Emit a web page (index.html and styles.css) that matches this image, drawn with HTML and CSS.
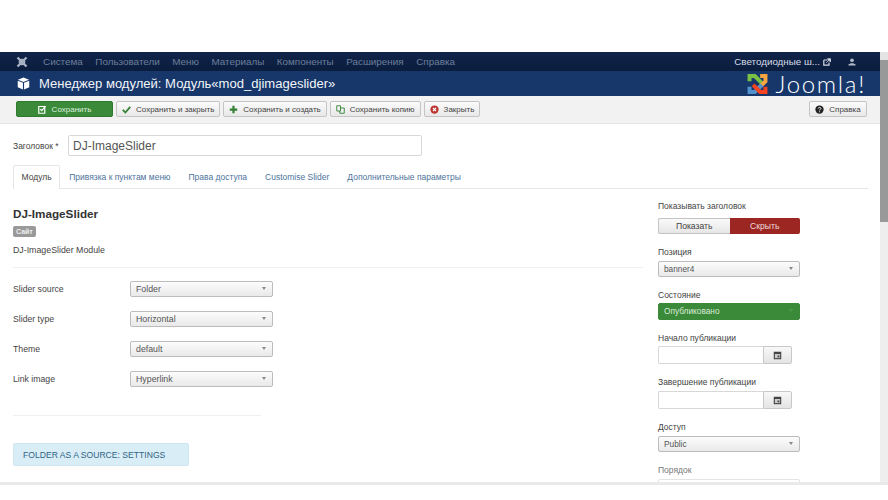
FILE: index.html
```html
<!DOCTYPE html>
<html lang="ru">
<head>
<meta charset="utf-8">
<title>Менеджер модулей</title>
<link rel="stylesheet" href="styles.css">
</head>
<body>
<div class="frame">
  <div class="app">
    <div class="page">
      <nav class="navbar">
        <svg class="nav-logo" viewBox="0 0 16 16"><path d="M2 2l12 12M14 2L2 14" stroke="#aab4c4" stroke-width="3"/><circle cx="8" cy="8" r="3.4" fill="none" stroke="#aab4c4" stroke-width="2"/></svg>
        <a class="nav-item">Система</a>
        <a class="nav-item">Пользователи</a>
        <a class="nav-item">Меню</a>
        <a class="nav-item">Материалы</a>
        <a class="nav-item">Компоненты</a>
        <a class="nav-item">Расширения</a>
        <a class="nav-item">Справка</a>
        <span class="nav-site">Светодиодные ш...</span>
        <svg class="nav-ext" viewBox="0 0 10 10"><path d="M1 2.500h4.500M1 2.500v6.500h6.500V5.500" fill="none" stroke="#d5dbe5" stroke-width="1.500"/><path d="M4 6l4.500-4.500M5.500 1h4v4z" stroke="#d5dbe5" fill="#d5dbe5"/></svg>
        <svg class="nav-user" viewBox="0 0 10 10"><circle cx="5" cy="2.800" r="2.300" fill="#aeb8c8"/><path d="M0.500 9.500V8l3-1.500h3L9.500 8v1.500z" fill="#aeb8c8"/></svg>
      </nav>
      <header class="titlebar">
        <svg class="cube" viewBox="0 0 14 14"><path d="M7 0.500l6 2.500-6 2.500-6-2.500z" fill="#fff"/><path d="M0.800 4l5.600 2.300V13.500L0.800 11z" fill="#fff"/><path d="M13.200 4L7.600 6.300V13.500L13.200 11z" fill="#fff"/></svg>
        <h1 class="title">Менеджер модулей: Модуль«mod_djimageslider»</h1>
        <div class="brand">
          <svg class="brand-mark" viewBox="0 0 26 26">
            <path d="M4 10V4h6l8 8" stroke="#7ac143" stroke-width="4.500" fill="none"/>
            <path d="M16 4h6v6l-8 8" stroke="#f9a541" stroke-width="4.500" fill="none"/>
            <path d="M4 16v6h6l8-8" stroke="#5091cd" stroke-width="4.500" fill="none"/>
            <path d="M22 16v6h-6l-8-8" stroke="#f44321" stroke-width="4.500" fill="none"/>
          </svg>
          <span class="brand-name">Joomla!</span>
        </div>
      </header>
      <div class="toolbar">
        <button class="btn btn-save">
          <svg class="ico" viewBox="0 0 12 12"><path d="M1 2h8v9H1z" fill="none" stroke="#fff" stroke-width="1.600"/><path d="M3 5.500l2 2 5-6" fill="none" stroke="#fff" stroke-width="1.800"/></svg>
          Сохранить
        </button>
        <button class="btn">
          <svg class="ico" viewBox="0 0 12 12"><path d="M1 6.500l3.500 3.500L11 2.500" fill="none" stroke="#378137" stroke-width="2.400"/></svg>
          Сохранить и закрыть
        </button>
        <button class="btn">
          <svg class="ico" viewBox="0 0 12 12"><path d="M6 1v10M1 6h10" stroke="#378137" stroke-width="3"/></svg>
          Сохранить и создать
        </button>
        <button class="btn">
          <svg class="ico" viewBox="0 0 12 12"><path d="M1 1h5v7H1zM6 4h5v7H5V8" fill="none" stroke="#378137" stroke-width="1.200"/></svg>
          Сохранить копию
        </button>
        <button class="btn">
          <svg class="ico" viewBox="0 0 12 12"><circle cx="6" cy="6" r="5.500" fill="#bd362f"/><path d="M4 4l4 4M8 4l-4 4" stroke="#fff" stroke-width="1.600"/></svg>
          Закрыть
        </button>
        <button class="btn btn-help">
          <svg class="ico" viewBox="0 0 12 12"><circle cx="6" cy="6" r="5.500" fill="#222"/><path d="M4.300 4.600C4.300 2.800 7.800 2.800 7.800 4.600 7.800 6 6 5.800 6 7.200" fill="none" stroke="#fff" stroke-width="1.300"/><circle cx="6" cy="9" r=".8" fill="#fff"/></svg>
          Справка
        </button>
      </div>
      <main class="content">
        <div class="title-row">
          <label class="title-label">Заголовок *</label>
          <input class="title-input" value="DJ-ImageSlider">
        </div>
        <ul class="tabs">
          <li class="tab tab-active">Модуль</li>
          <li class="tab">Привязка к пунктам меню</li>
          <li class="tab">Права доступа</li>
          <li class="tab">Customise Slider</li>
          <li class="tab">Дополнительные параметры</li>
        </ul>
        <div class="columns">
          <section class="left">
            <h2 class="mod-name">DJ-ImageSlider</h2>
            <span class="badge">Сайт</span>
            <p class="mod-desc">DJ-ImageSlider Module</p>
            <hr class="rule">
            <div class="field"><label class="field-label">Slider source</label><div class="select">Folder<i class="caret"></i></div></div>
            <div class="field"><label class="field-label">Slider type</label><div class="select">Horizontal<i class="caret"></i></div></div>
            <div class="field"><label class="field-label">Theme</label><div class="select">default<i class="caret"></i></div></div>
            <div class="field"><label class="field-label">Link image</label><div class="select">Hyperlink<i class="caret"></i></div></div>
            <hr class="rule rule-short">
            <div class="notice">FOLDER AS A SOURCE: SETTINGS</div>
          </section>
          <aside class="right">
            <label class="side-label side-label-wide">Показывать заголовок</label>
            <div class="toggle"><span class="toggle-off">Показать</span><span class="toggle-on">Скрыть</span></div>
            <label class="side-label">Позиция</label>
            <div class="select select-side">banner4<i class="caret"></i></div>
            <label class="side-label side-label-tight">Состояние</label>
            <div class="select select-side select-green">Опубликовано<i class="caret caret-green"></i></div>
            <label class="side-label side-label-tight">Начало публикации</label>
            <div class="date"><span class="date-input"></span><span class="date-btn"><svg class="cal" viewBox="0 0 12 12"><path d="M1 1h10v10H1z" fill="#444"/><path d="M2.500 4h7v5.500h-7z" fill="#ccc"/><path d="M6 6h2.500v2.500H6z" fill="#444"/></svg></span></div>
            <label class="side-label">Завершение публикации</label>
            <div class="date"><span class="date-input"></span><span class="date-btn"><svg class="cal" viewBox="0 0 12 12"><path d="M1 1h10v10H1z" fill="#444"/><path d="M2.500 4h7v5.500h-7z" fill="#ccc"/><path d="M6 6h2.500v2.500H6z" fill="#444"/></svg></span></div>
            <label class="side-label">Доступ</label>
            <div class="select select-side">Public<i class="caret"></i></div>
            <label class="side-label side-last">Порядок</label>
            <div class="order-field"></div>
          </aside>
        </div>
      </main>
    </div>
    <div class="scrollbar"><div class="scroll-up"></div><div class="thumb"></div></div>
  </div>
</div>
</body>
</html>
```
FILE: styles.css
```css
* { box-sizing: border-box; }
html, body { margin: 0; height: 100%; background: #fff; overflow: hidden; }
body { font-family: "Liberation Sans", Arial, sans-serif; color: #444; font-size: 9px; }
.frame { padding-top: 52px; height: 500px; }
.app { display: flex; height: 433px; border-bottom: 3px solid #e9e9e9; }
.page { flex: 1; min-width: 0; overflow: hidden; }
.scrollbar { width: 8px; background: #eeeeee; }
.scroll-up { height: 8px; background: #e4e4e4; }
.thumb { height: 162px; background: #999999; }

.navbar { height: 19px; background: linear-gradient(#10244a, #0b1d3d); display: flex; align-items: center; padding-left: 16px; }
.nav-logo { width: 12px; height: 12px; margin-right: 15px; }
.nav-item { color: #6c7f9c; font-size: 9.900px; margin-right: 12.500px; }
.nav-site { margin-left: auto; color: #d5dbe5; font-size: 9.800px; }
.nav-ext { width: 8px; height: 8px; margin-left: 3px; }
.nav-user { width: 8px; height: 8px; margin-left: 17px; margin-right: 24px; }

.titlebar { height: 25px; background: #17376b; display: flex; align-items: center; padding-left: 17px; }
.cube { width: 13px; height: 13px; margin-right: 9px; }
.title { margin: 0; font-size: 13.050px; font-weight: 400; color: #f2f5f9; }
.brand { margin-left: auto; margin-right: 14px; display: flex; align-items: center; gap: 6px; }
.brand-mark { width: 23px; height: 24px; }
.brand-name { font-family: Lato, sans-serif; font-weight: 300; font-size: 24px; line-height: 25px; letter-spacing: 1.700px; color: #fff; }

.toolbar { height: 28px; background: #f2f2f2; border-bottom: 1px solid #e6e6e6; display: flex; align-items: center; padding: 0 13px 1px 16px; gap: 3px; }
.btn { height: 16px; padding: 0 5px; font: 8px "Liberation Sans", Arial, sans-serif; color: #444; background: linear-gradient(#fbfbfb, #e8e8e8); border: 1px solid #c4c4c4; border-radius: 2px; display: flex; align-items: center; gap: 5px; white-space: nowrap; }
.ico { width: 9px; height: 9px; flex: none; }
.btn-save { width: 97px; justify-content: center; background: #3a8a3a; border-color: #2f7a2f; color: #dfeedd; }
.btn-help { margin-left: auto; width: 58px; justify-content: center; }

.content { padding: 11px 12px 0 13px; }
.title-row { display: flex; align-items: center; height: 21px; }
.title-label { width: 55px; font-size: 8.500px; }
.title-input { width: 354px; height: 21px; border: 1px solid #d8d8d8; border-radius: 2px; padding: 0 4px; font: 12px "Liberation Sans", Arial, sans-serif; color: #555; background: #fff; }

.tabs { list-style: none; margin: 9px 0 0; padding: 0; display: flex; height: 24px; border-bottom: 1px solid #e6e6e6; }
.tab { padding: 0 9px; line-height: 24px; color: #4d749c; font-size: 8.500px; white-space: nowrap; }
.tab-active { color: #444; background: #fff; border: 1px solid #e6e6e6; border-bottom: 0; height: 24px; line-height: 23px; padding: 0 7.500px; border-radius: 2px 2px 0 0; }

.columns { display: flex; justify-content: space-between; }
.left { width: 630px; padding-top: 18px; }
.mod-name { margin: 0; font-size: 11.700px; line-height: 14px; color: #333; }
.badge { display: inline-block; margin-top: 5px; background: #999; color: #eee; font-size: 7px; font-weight: 700; height: 11px; line-height: 11px; padding: 0 3px; border-radius: 2px; }
.mod-desc { margin: 7px 0 0; font-size: 8.800px; line-height: 12px; }
.rule { margin: 11px 0 0; border: 0; border-top: 1px solid #f0f0f0; }
.rule-short { width: 248px; margin-top: 21px; }

.field { display: flex; align-items: center; height: 30px; }
.rule + .field { margin-top: 6px; }
.field-label { width: 117px; font-size: 8.700px; }
.select { position: relative; width: 143px; height: 16px; line-height: 14px; padding-left: 5px; font-size: 8.800px; color: #555; background: linear-gradient(#fcfcfc, #e9e9e9); border: 1px solid #bcbcbc; border-radius: 2px; }
.caret { position: absolute; right: 6px; top: 5px; border: 2.500px solid transparent; border-top: 3px solid #888; border-bottom: 0; }
.notice { width: 176px; height: 23px; margin-top: 27px; padding-left: 9px; line-height: 22px; background: #d9edf7; border: 1px solid #cfe6f1; border-radius: 2px; color: #2f6484; font-size: 8.600px; }

.right { width: 142px; margin-right: 68px; padding-top: 11px; }
.side-label { display: block; font-size: 8.500px; line-height: 12px; color: #444; margin-bottom: 3px; }
.side-label-wide { margin-bottom: 6px; }
.side-label-tight { margin-bottom: 2px; }
.toggle { display: flex; height: 16px; font-size: 8.600px; line-height: 16px; text-align: center; margin-bottom: 12px; }
.toggle-off { flex: 1; background: linear-gradient(#fafafa, #e6e6e6); border: 1px solid #c4c4c4; border-right: 0; border-radius: 2px 0 0 2px; line-height: 14px; }
.toggle-on { flex: 1; background: #9b2622; color: #f0dcdc; border-radius: 0 2px 2px 0; }
.select-side { width: 142px; margin-bottom: 12px; font-size: 8.300px; }
.select-green { height: 17px; line-height: 15px; background: #3a8a3a; border-color: #3a8a3a; color: #dcebd9; }
.caret-green { border-top-color: #4d9a4d; }
.date { display: flex; height: 18px; margin-bottom: 12px; }
.date-input { width: 105px; background: #fff; border: 1px solid #d8d8d8; border-right: 0; border-radius: 2px 0 0 2px; }
.date-btn { width: 29px; display: flex; align-items: center; justify-content: center; background: linear-gradient(#f8f8f8, #e4e4e4); border: 1px solid #c8c8c8; border-radius: 0 2px 2px 0; }
.cal { width: 9px; height: 9px; }
.side-last { color: #777; }
.order-field { height: 16px; margin-top: 2px; border: 1px solid #e4e4e4; border-radius: 2px; }
```
